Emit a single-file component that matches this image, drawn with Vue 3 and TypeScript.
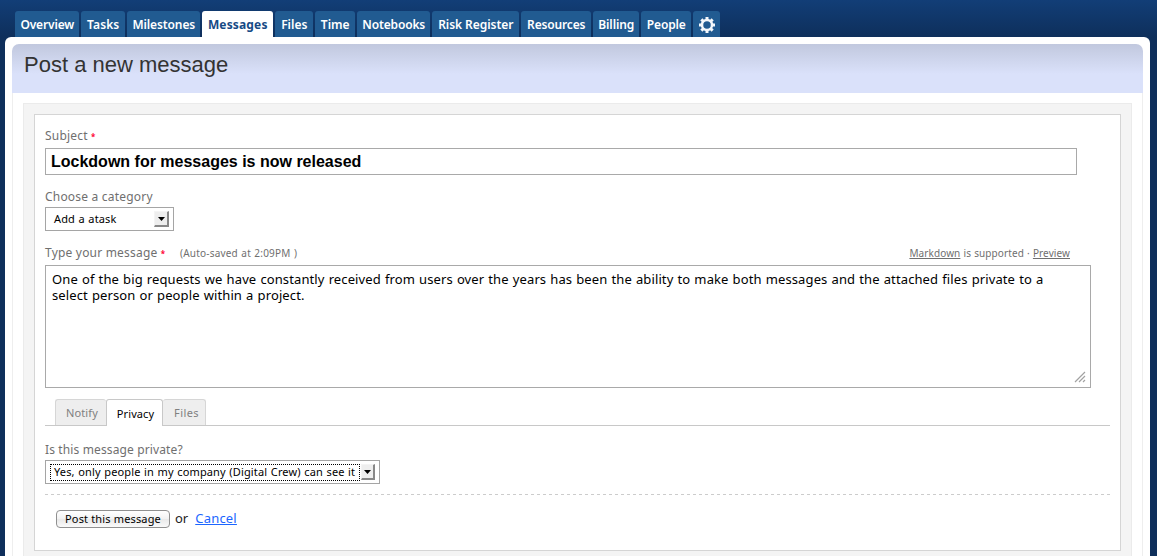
<script setup lang="ts">
import { ref } from 'vue'

interface NavTab {
  label: string
  width: number
  spacing: number
}

const tabs: NavTab[] = [
  { label: 'Overview', width: 64, spacing: -0.15 },
  { label: 'Tasks', width: 44, spacing: 0.1 },
  { label: 'Milestones', width: 73, spacing: -0.1 },
  { label: 'Messages', width: 71, spacing: 0.15 },
  { label: 'Files', width: 38, spacing: 0 },
  { label: 'Time', width: 40, spacing: 0 },
  { label: 'Notebooks', width: 73, spacing: -0.15 },
  { label: 'Risk Register', width: 87, spacing: -0.05 },
  { label: 'Resources', width: 70, spacing: -0.15 },
  { label: 'Billing', width: 46, spacing: -0.1 },
  { label: 'People', width: 50, spacing: -0.15 },
]
const activeTab = ref('Messages')

const sections = ['Notify', 'Privacy', 'Files']
const activeSection = ref('Privacy')

const subject = ref('Lockdown for messages is now released')
const message = ref(
  'One of the big requests we have constantly received from users over the years has been the ability to make both messages and the attached files private to a select person or people within a project.',
)
const teeth = [0, 45, 90, 135, 180, 225, 270, 315]
</script>

<template>
  <div class="page">
    <nav class="nav">
      <a
        v-for="tab in tabs"
        :key="tab.label"
        class="nav-tab"
        :class="{ active: tab.label === activeTab }"
        :style="{ width: tab.width + 'px', letterSpacing: tab.spacing + 'px' }"
        @click="activeTab = tab.label"
      >{{ tab.label }}</a>
      <a class="nav-tab gear">
        <svg width="18" height="18" viewBox="-9 -9 18 18">
          <circle r="5" fill="none" stroke="#f4f8fb" stroke-width="2.5" />
          <rect v-for="t in teeth" :key="t" x="-1.5" y="-8" width="3" height="3" fill="#f4f8fb" :transform="`rotate(${t})`" />
        </svg>
      </a>
    </nav>

    <main class="shell">
      <header class="title-bar"><h1>Post a new message</h1></header>
      <div class="content">
        <div class="panel">
          <form class="form" @submit.prevent>
            <div class="label subject-label">Subject <span class="req">*</span></div>
            <input v-model="subject" class="subject" type="text" />

            <div class="label category-label">Choose a category</div>
            <div class="select category">
              <span class="value">Add a atask</span>
              <span class="arrow"><svg width="7" height="4"><path d="M0 0h7L3.5 4z" /></svg></span>
            </div>

            <div class="message-head">
              <span class="label type-label">Type your message <span class="req">*</span></span>
              <span class="saved">(Auto-saved at 2:09PM )</span>
              <span class="help"><a>Markdown</a> is supported · <a>Preview</a></span>
            </div>
            <div class="editor">
              <textarea v-model="message" spellcheck="false"></textarea>
              <svg class="grip" width="12" height="12" viewBox="0 0 12 12">
                <path d="M1 11L11 1M5 11l6-6M9 11l2-2" />
              </svg>
            </div>

            <div class="sections">
              <a
                v-for="name in sections"
                :key="name"
                class="section"
                :class="[name.toLowerCase(), { active: name === activeSection }]"
                @click="activeSection = name"
              >{{ name }}</a>
            </div>

            <div class="label private-label">Is this message private?</div>
            <div class="select privacy-select">
              <span class="value">Yes, only people in my company (Digital Crew) can see it</span>
              <span class="arrow"><svg width="7" height="4"><path d="M0 0h7L3.5 4z" /></svg></span>
            </div>

            <div class="divider"></div>
            <div class="actions">
              <button type="submit">Post this message</button>
              <span class="or">or</span>
              <a class="cancel">Cancel</a>
            </div>
          </form>
        </div>
      </div>
    </main>
  </div>
</template>

<style>
body {
  margin: 0;
  overflow: hidden;
}
</style>

<style scoped>
* {
  box-sizing: border-box;
}
.page {
  height: 556px;
  overflow: hidden;
  display: flex;
  flex-direction: column;
  padding: 11px 7px 0 5px;
  background: linear-gradient(#123e77 0, #0e2f5b 37px, #0e2f5b 100%);
  font-family: 'Noto Sans', 'Open Sans', sans-serif;
  color: #000;
}
.nav {
  display: flex;
  gap: 2px;
  height: 26px;
  flex: none;
  padding-left: 10px;
}
.nav-tab {
  flex: none;
  height: 26px;
  padding-left: 0.5px;
  border-radius: 3px 3px 0 0;
  background: #215b91;
  color: #fff;
  font-size: 12px;
  font-weight: 600;
  line-height: 27px;
  text-align: center;
  white-space: nowrap;
}
.nav-tab.active {
  background: #fff;
  color: #164a85;
  font-weight: 700;
}
.gear {
  width: 27px;
  display: flex;
  align-items: center;
  justify-content: center;
  padding-top: 2px;
}
.shell {
  flex: 1;
  min-height: 0;
  padding: 7px 7px 0;
  border-radius: 6px 6px 0 0;
  background: #fff;
}
.title-bar {
  height: 49px;
  padding-left: 12px;
  border-radius: 7px 7px 0 0;
  background: linear-gradient(#c1c8de 0, #dae1fa 30px, #dae1fa 100%);
}
h1 {
  margin: 0;
  font: 400 22px/42px 'Liberation Sans', Arial, sans-serif;
  color: #333;
}
.content {
  height: 480px;
  padding: 10px 10px 0;
  border: 1px solid #eee;
  border-width: 0 1px;
}
.panel {
  height: 470px;
  padding: 10px;
  border: 1px solid #ebebeb;
  background: #f4f4f4;
}
.form {
  height: 437px;
  padding: 0 10px;
  border: 1px solid #d5d5d5;
  background: #fff;
}
.label {
  font-size: 12px;
  line-height: 18px;
  letter-spacing: 0.2px;
  color: #6f6f6f;
  white-space: pre;
}
.req {
  color: #f03;
  font-size: 8px;
  font-weight: 700;
  line-height: 1;
}
.subject-label {
  padding-top: 12px;
  height: 33px;
}
.subject {
  display: block;
  width: 1032px;
  height: 27px;
  padding: 0 5px;
  border: 1px solid #a9a9a9;
  outline: 0;
  font: 700 16px/25px 'Liberation Sans', Arial, sans-serif;
  color: #000;
}
.category-label {
  margin-top: 13px;
  height: 19px;
}
.select {
  display: flex;
  height: 24px;
  border: 1px solid #a5a5a5;
  font-size: 11px;
  white-space: nowrap;
}
.category {
  width: 129px;
  padding: 3px 4px 3px 8px;
}
.value {
  flex: 1;
  line-height: 16px;
  letter-spacing: 0.15px;
  word-spacing: 0.5px;
}
.arrow {
  width: 15px;
  height: 16px;
  display: flex;
  align-items: center;
  justify-content: center;
  border: 1px solid #f4f4f4;
  border-right: 2px solid #888;
  border-bottom: 2px solid #888;
  background: #eee;
}
.message-head {
  display: flex;
  height: 34px;
  padding: 13px 40px 0 0;
}
.type-label {
  width: 122px;
}
.saved {
  margin-left: 13px;
  font-size: 10px;
  line-height: 19px;
  letter-spacing: 0.2px;
  word-spacing: 0.6px;
  color: #6f6f6f;
}
.help {
  margin-left: auto;
  font-size: 10px;
  line-height: 18px;
  letter-spacing: 0.1px;
  word-spacing: 0.4px;
  color: #6f6f6f;
}
.help a {
  text-decoration: underline;
}
.editor {
  position: relative;
  width: 1046px;
  height: 123px;
}
textarea {
  display: block;
  width: 1046px;
  height: 123px;
  padding: 5px 30px 6px 6px;
  border: 1px solid #a9a9a9;
  outline: 0;
  resize: none;
  overflow: hidden;
  font: 13px/16px 'Noto Sans', 'Open Sans', sans-serif;
  letter-spacing: 0.11px;
  word-spacing: 0.6px;
  color: #000;
}
.grip {
  position: absolute;
  right: 5px;
  bottom: 5px;
  fill: none;
  stroke: #a2a2a2;
  stroke-width: 1.2;
}
.sections {
  display: flex;
  width: 1065px;
  height: 27px;
  margin-top: 11px;
  padding-left: 10px;
  border-bottom: 1px solid #c8c8c8;
}
.section {
  height: 26px;
  border: 1px solid #d6d6d6;
  border-bottom: 0;
  border-radius: 3px 3px 0 0;
  background: #eee;
  color: #808080;
  font-size: 11px;
  line-height: 26px;
  letter-spacing: 0.1px;
  padding-left: 2px;
  text-align: center;
}
.section.active {
  height: 27px;
  border-color: #c8c8c8;
  background: #fff;
  color: #000;
  line-height: 28px;
}
.notify {
  width: 51px;
  border-right: 0;
}
.privacy {
  width: 57px;
}
.section.files {
  width: 43px;
  padding-left: 5px;
  letter-spacing: 0.4px;
  border-left: 0;
}
.private-label {
  margin-top: 15px;
  height: 19px;
  letter-spacing: 0.13px;
}
.privacy-select {
  width: 335px;
  padding: 3px 4px;
}
.privacy-select .value {
  flex: none;
  width: 310px;
  height: 17px;
  margin-right: 1px;
  padding-left: 3px;
  border: 1px dotted #000;
  line-height: 14px;
}
.divider {
  width: 1065px;
  height: 1px;
  margin-top: 10px;
  background: repeating-linear-gradient(90deg, #ccc 0 3px, transparent 3px 6px);
}
.actions {
  display: flex;
  margin: 15px 0 0 11px;
  height: 18px;
}
button {
  width: 114px;
  height: 18px;
  padding: 0;
  border: 1px solid #909090;
  border-radius: 4px;
  background: linear-gradient(#fff 0, #f2f2f2 50%, #e8e8e8 50%, #fafafa 100%);
  font: 11px/16px 'Noto Sans', 'Open Sans', sans-serif;
  letter-spacing: 0.15px;
  color: #000;
}
.or,
.cancel {
  font-size: 13px;
  line-height: 17px;
}
.or {
  margin-left: 5px;
  color: #222;
}
.cancel {
  margin-left: 7px;
  letter-spacing: 0.2px;
  color: #1c66ff;
  text-decoration: underline;
}
</style>
